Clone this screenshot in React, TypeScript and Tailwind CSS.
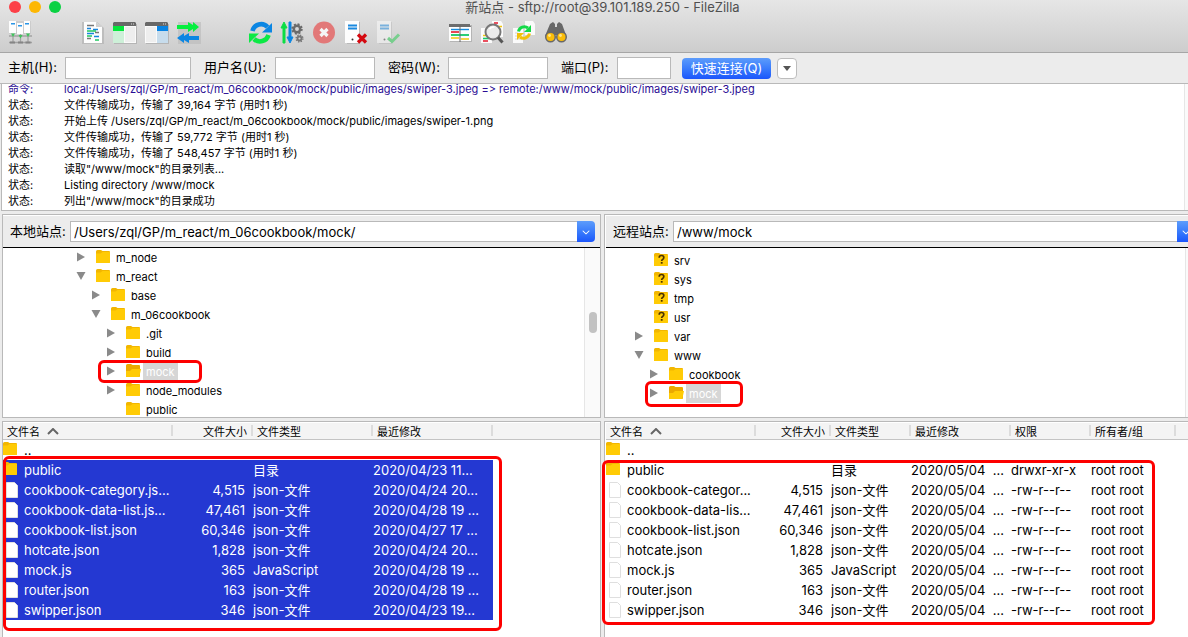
import type { ReactNode } from 'react';
import { clsx } from 'clsx';
import { FaChevronDown } from 'react-icons/fa6';

type LogLine = { kind: 'command' | 'status'; text: string };

type TreeNode = {
  name: string;
  level: 0 | 1 | 2;
  state?: 'open' | 'closed';
  unknown?: boolean;
  selected?: boolean;
};

type FileRow = {
  name: string;
  size?: string;
  type?: string;
  date?: string;
  perms?: string;
  owner?: string;
  folder?: boolean;
};

const logLines: LogLine[] = [
  {
    kind: 'command',
    text: 'local:/Users/zql/GP/m_react/m_06cookbook/mock/public/images/swiper-3.jpeg => remote:/www/mock/public/images/swiper-3.jpeg',
  },
  { kind: 'status', text: '文件传输成功，传输了 39,164 字节 (用时1 秒)' },
  {
    kind: 'status',
    text: '开始上传 /Users/zql/GP/m_react/m_06cookbook/mock/public/images/swiper-1.png',
  },
  { kind: 'status', text: '文件传输成功，传输了 59,772 字节 (用时1 秒)' },
  { kind: 'status', text: '文件传输成功，传输了 548,457 字节 (用时1 秒)' },
  { kind: 'status', text: '读取"/www/mock"的目录列表...' },
  { kind: 'status', text: 'Listing directory /www/mock' },
  { kind: 'status', text: '列出"/www/mock"的目录成功' },
];

const localTree: TreeNode[] = [
  { name: 'm_node', level: 0, state: 'closed' },
  { name: 'm_react', level: 0, state: 'open' },
  { name: 'base', level: 1, state: 'closed' },
  { name: 'm_06cookbook', level: 1, state: 'open' },
  { name: '.git', level: 2, state: 'closed' },
  { name: 'build', level: 2, state: 'closed' },
  { name: 'mock', level: 2, state: 'closed', selected: true },
  { name: 'node_modules', level: 2, state: 'closed' },
  { name: 'public', level: 2 },
];

const remoteTree: TreeNode[] = [
  { name: 'srv', level: 0, unknown: true },
  { name: 'sys', level: 0, unknown: true },
  { name: 'tmp', level: 0, unknown: true },
  { name: 'usr', level: 0, unknown: true },
  { name: 'var', level: 0, state: 'closed' },
  { name: 'www', level: 0, state: 'open' },
  { name: 'cookbook', level: 1, state: 'closed' },
  { name: 'mock', level: 1, state: 'closed', selected: true },
];

const localFiles: FileRow[] = [
  { name: '..', folder: true },
  { name: 'public', type: '目录', date: '2020/04/23 11...', folder: true },
  { name: 'cookbook-category.js...', size: '4,515', type: 'json-文件', date: '2020/04/24 20...' },
  { name: 'cookbook-data-list.js...', size: '47,461', type: 'json-文件', date: '2020/04/28 19 ...' },
  { name: 'cookbook-list.json', size: '60,346', type: 'json-文件', date: '2020/04/27 17 ...' },
  { name: 'hotcate.json', size: '1,828', type: 'json-文件', date: '2020/04/24 20...' },
  { name: 'mock.js', size: '365', type: 'JavaScript', date: '2020/04/28 19 ...' },
  { name: 'router.json', size: '163', type: 'json-文件', date: '2020/04/28 19 ...' },
  { name: 'swipper.json', size: '346', type: 'json-文件', date: '2020/04/23 19...' },
];

const remoteFiles: FileRow[] = [
  { name: '..', folder: true },
  { name: 'public', type: '目录', date: '2020/05/04  ...', perms: 'drwxr-xr-x', owner: 'root root', folder: true },
  { name: 'cookbook-categor...', size: '4,515', type: 'json-文件', date: '2020/05/04  ...', perms: '-rw-r--r--', owner: 'root root' },
  { name: 'cookbook-data-lis...', size: '47,461', type: 'json-文件', date: '2020/05/04  ...', perms: '-rw-r--r--', owner: 'root root' },
  { name: 'cookbook-list.json', size: '60,346', type: 'json-文件', date: '2020/05/04  ...', perms: '-rw-r--r--', owner: 'root root' },
  { name: 'hotcate.json', size: '1,828', type: 'json-文件', date: '2020/05/04  ...', perms: '-rw-r--r--', owner: 'root root' },
  { name: 'mock.js', size: '365', type: 'JavaScript', date: '2020/05/04  ...', perms: '-rw-r--r--', owner: 'root root' },
  { name: 'router.json', size: '163', type: 'json-文件', date: '2020/05/04  ...', perms: '-rw-r--r--', owner: 'root root' },
  { name: 'swipper.json', size: '346', type: 'json-文件', date: '2020/05/04  ...', perms: '-rw-r--r--', owner: 'root root' },
];

const headers = ['文件名', '文件大小', '文件类型', '最近修改', '权限', '所有者/组'];

function ToolButton({ label, children }: { label: string; children: ReactNode }) {
  return (
    <button type="button" aria-label={label} className="size-6 shrink-0">
      <svg viewBox="0 0 24 24" className="size-6 overflow-visible" fill="none">
        {children}
      </svg>
    </button>
  );
}

function Toolbar() {
  return (
    <div className="flex gap-12 pt-[6px] pb-[7px] pl-[9px]">
      <ToolButton label="站点管理器">
        <path d="M0 0h22v13H0z" fill="#bdbdbd" opacity=".5" />
        <path d="M0 0h7v12H0zM8 2h6v11H8zM15 0h6v12h-6z" fill="#fdfdfd" />
        <path d="M2 2h4v1.500H2zM9 4h4v1.500H9zM16 2h4v1.500h-4z" fill="#2a95e6" />
        <path d="M0 15h23M0 21.500h23M4 13v8M11.500 13v8M19 13v8" stroke="#a2a2a2" strokeWidth="1.300" />
        <path d="M2 12.500h4l-2 3.500zM9.500 14h4l-2 3.500zM17 12.500h4l-2 3.500z" fill="#3fc45c" />
        <path d="M1 20.500h5v2H1zM9 20.500h5v2H9zM16.500 20.500h5v2h-5z" fill="#858585" />
      </ToolButton>

      <div className="flex gap-2">
        <ToolButton label="消息日志">
          <path d="M1 1h15l7 6v16H1z" fill="#b4b4b4" opacity=".7" />
          <path d="M3 1h12l6 5v16H3z" fill="#fdfdfd" />
          <path d="M15 1v5h6z" fill="#cfcfcf" />
          <path d="M6 4.500h7M14 11.500h4M6 17.500h4" stroke="#777" strokeWidth="1.300" />
          <path d="M6 7.500h4M12 8.500h5M6 12.500h7M13 15.500h5" stroke="#1685dc" strokeWidth="1.300" />
          <path d="M6 10h9M6 15h5M14 19h4" stroke="#1fc860" strokeWidth="1.300" />
        </ToolButton>
        <ToolButton label="本地目录树">
          <path d="M1 3h23v20H1z" fill="#b5b5b5" />
          <path d="M0 2h23v20H0z" fill="#fafafa" />
          <path d="M1 1h21l1 1v3H0V2z" fill="#686868" />
          <path d="M18 3h1M20 3h1" stroke="#ddd" />
          <path d="M0 5h11v5H0z" fill="#05e63c" />
          <path d="M0 10h11v12H0z" fill="#cdf0d8" />
          <path d="M12 6h10v15H12z" fill="#eee" />
        </ToolButton>
        <ToolButton label="远程目录树">
          <path d="M1 3h23v20H1z" fill="#b5b5b5" />
          <path d="M0 2h23v20H0z" fill="#fafafa" />
          <path d="M1 1h21l1 1v3H0V2z" fill="#686868" />
          <path d="M18 3h1M20 3h1" stroke="#ddd" />
          <path d="M12 5h11v5H12z" fill="#0884e4" />
          <path d="M12 10h11v12H12z" fill="#c7dcec" />
          <path d="M1 6h10v15H1z" fill="#eee" />
        </ToolButton>
        <ToolButton label="传输队列">
          <path d="M1 1h23v22H1z" fill="#b9b9b9" opacity=".6" />
          <path d="M0 4h11V1l5 3V1l6 5-6 5V8l-5 3V8H0z" fill="#06ef3f" />
          <path d="M22 15H12v-3l-5 3v-3l-7 5 7 5v-3l5 3v-3h10z" fill="#0b86e3" />
        </ToolButton>
      </div>

      <div className="flex gap-2">
        <ToolButton label="刷新">
          <path d="M3.500 10A8.800 8.800 0 0 1 18.500 6" stroke="#0b86e3" strokeWidth="4.600" />
          <path d="M23 2v9.500H13z" fill="#0b86e3" />
          <path d="M19.500 14A8.800 8.800 0 0 1 5 18" stroke="#0ce945" strokeWidth="4.600" />
          <path d="M0 22v-9.500H10z" fill="#0ce945" />
        </ToolButton>
        <ToolButton label="处理队列">
          <path d="M2 22V7H0l3-6 3 6H4v15z" fill="#0cde45" stroke="#0cde45" />
          <path d="M8 1v15H6l3 6 3-6h-2V1z" fill="#0b86e3" stroke="#0b86e3" />
          <circle cx="16" cy="8" r="3.200" stroke="#6b6b6b" strokeWidth="2.500" />
          <circle cx="16" cy="8" r="4.800" stroke="#6b6b6b" strokeWidth="1.800" strokeDasharray="2 1.770" />
          <circle cx="18.500" cy="17.500" r="2" stroke="#777" strokeWidth="1.800" />
          <circle cx="18.500" cy="17.500" r="3.400" stroke="#777" strokeWidth="1.300" strokeDasharray="1.400 1.270" />
        </ToolButton>
        <ToolButton label="取消">
          <circle cx="11" cy="11.500" r="11" fill="#e27878" />
          <path d="M7.500 8l7 7M14.500 8l-7 7" stroke="#f4f4f4" strokeWidth="3.200" />
        </ToolButton>
        <ToolButton label="断开连接">
          <path d="M2 1h13v22H2z" fill="#b9b9b9" />
          <path d="M0 0h14v22H0z" fill="#fdfdfd" />
          <path d="M3 4.500h9M3 7.500h9" stroke="#1b8ae0" strokeWidth="1.800" />
          <circle cx="7.500" cy="18.500" r="1" fill="#333" />
          <path d="M13 13.500l8 8M21 13.500l-8 8" stroke="#d40910" strokeWidth="3.200" />
        </ToolButton>
        <ToolButton label="重新连接">
          <g opacity=".5">
            <path d="M2 1h13v22H2z" fill="#b9b9b9" />
            <path d="M0 0h14v22H0z" fill="#fdfdfd" />
            <path d="M3 4.500h9M3 7.500h9" stroke="#1b8ae0" strokeWidth="1.800" />
            <circle cx="7.500" cy="18.500" r="1" fill="#333" />
            <path d="M11 17l4 3.500 7-7" stroke="#1fcb4a" strokeWidth="3" />
          </g>
        </ToolButton>
      </div>

      <div className="flex gap-2">
        <ToolButton label="目录列表过滤器">
          <path d="M1 4h22v17H1z" fill="#b5b5b5" />
          <path d="M0 3h22v17H0z" fill="#fdfdfd" />
          <path d="M0 3h21l1 3H0z" fill="#6d6d6d" />
          <path d="M2 8.500h18" stroke="#178bdd" strokeWidth="1.400" />
          <path d="M2 11h8" stroke="#e3182c" strokeWidth="1.600" />
          <path d="M2 14h18" stroke="#14c967" strokeWidth="1.800" />
          <path d="M2 17h8M12 18h8" stroke="#f2c70c" strokeWidth="1.600" />
          <path d="M11 4v17" stroke="#666" />
        </ToolButton>
        <ToolButton label="目录比较">
          <path d="M11 0h9l2 3v13H11z" fill="#fbfbfb" />
          <path d="M0 7h11v15H0z" fill="#fbfbfb" />
          <path d="M13 2h4M2 20h5" stroke="#e3182c" strokeWidth="1.500" />
          <path d="M17 5.500h4M2 14.500h3" stroke="#f2c70c" strokeWidth="1.500" />
          <path d="M2 17.500h6" stroke="#14c967" strokeWidth="1.600" />
          <circle cx="12" cy="11" r="7.500" fill="#e7e7e7" fillOpacity=".8" stroke="#777" strokeWidth="2" />
          <path d="M8.500 8a5 5 0 0 1 5-2" stroke="#fff" strokeWidth="1.500" />
          <path d="M17 16.500l4.500 5" stroke="#555" strokeWidth="3" />
        </ToolButton>
        <ToolButton label="同步浏览">
          <path d="M12 0h8l2 3v11H12z" fill="#fafafa" />
          <path d="M0 7h10v15H0z" fill="#fafafa" />
          <path d="M2 12h3M2 15h4M2 18h7" stroke="#d2d2d2" />
          <path d="M5.500 10.500A6 6 0 0 1 15 7" stroke="#15da49" strokeWidth="3" />
          <path d="M18 4v7h-7z" fill="#15da49" />
          <path d="M16.500 12.500A6 6 0 0 1 7 16" stroke="#f2c008" strokeWidth="3" />
          <path d="M4 19v-7h7z" fill="#f2c008" />
        </ToolButton>
        <ToolButton label="查找文件">
          <path d="M5 3l3-2 2 2v3h2V3l2-2 3 2 4 11-5 4h-2l-2-4h-2l-2 4H5l-5-3z" fill="#686868" />
          <circle cx="5.500" cy="16" r="5.500" fill="#686868" />
          <circle cx="16.500" cy="16" r="5.500" fill="#686868" />
          <circle cx="5.500" cy="16" r="4" fill="#fbbd08" />
          <circle cx="16.500" cy="16" r="4" fill="#fbbd08" />
          <circle cx="4.500" cy="14.500" r="1.400" fill="#ffe58a" />
          <circle cx="15.500" cy="14.500" r="1.400" fill="#ffe58a" />
        </ToolButton>
      </div>
    </div>
  );
}

function TitleBar() {
  return (
    <header className="border-b border-[#a6a6a6] bg-linear-to-b from-[#e6e6e6] to-[#cdcdcd]">
      <div className="relative flex h-[15px] items-center justify-center">
        <div className="absolute top-px left-[9px] flex gap-2">
          <button type="button" aria-label="关闭" className="size-3 rounded-full bg-[#fc3f47]" />
          <button type="button" aria-label="最小化" className="size-3 rounded-full bg-[#fdb703]" />
          <button type="button" aria-label="缩放" className="size-3 rounded-full bg-[#0ad142]" />
        </div>
        <h1 className="text-[13px] leading-[15px] text-[#505050]">
          新站点 - sftp://root@39.101.189.250 - FileZilla
        </h1>
      </div>
      <Toolbar />
    </header>
  );
}

const fieldClass = 'h-[22px] border border-[#b9b9b9] bg-white px-1 outline-none';

function QuickConnect() {
  return (
    <form className="flex items-center gap-[11px] border-b border-[#b9b9b9] bg-[#ececec] py-1 pl-[6px] text-[13px]">
      <div className="flex items-center">
        <label htmlFor="host" className="w-[59px] pl-[2px]">主机(H):</label>
        <input id="host" className={clsx(fieldClass, 'w-[126px]')} />
      </div>
      <div className="flex items-center">
        <label htmlFor="user" className="w-[73px] pl-[2px]">用户名(U):</label>
        <input id="user" className={clsx(fieldClass, 'w-[100px]')} />
      </div>
      <div className="flex items-center">
        <label htmlFor="pass" className="w-[62px] pl-[2px]">密码(W):</label>
        <input id="pass" type="password" className={clsx(fieldClass, 'w-[100px]')} />
      </div>
      <div className="flex items-center">
        <label htmlFor="port" className="w-[58px] pl-[2px]">端口(P):</label>
        <input id="port" className={clsx(fieldClass, 'w-[54px]')} />
      </div>
      <div className="flex items-center gap-[6px]">
        <button
          type="button"
          className="h-[21px] w-[89px] rounded bg-linear-to-b from-[#5d9cfb] to-[#1c55fb] leading-5 text-white"
        >
          快速连接(Q)
        </button>
        <button
          type="button"
          aria-label="历史记录"
          className="flex h-[21px] w-5 items-center justify-center rounded border border-[#bdbdbd] bg-white"
        >
          <svg viewBox="0 0 8 5" className="w-2" fill="#555">
            <path d="M0 0h8L4 5z" />
          </svg>
        </button>
      </div>
    </form>
  );
}

function MessageLog() {
  return (
    <section className="ml-px flex h-[127px] flex-col border-b border-l border-[#b9b9b9] bg-white">
      <div className="flex min-h-0 flex-1">
        <ul className="flex flex-1 flex-col justify-end overflow-hidden pb-px pl-[6px] text-[11px] leading-4">
          {logLines.map((line) => (
            <li
              key={line.text}
              className={clsx('flex shrink-0 whitespace-pre', line.kind === 'command' && 'text-[#2a0d94]')}
            >
              <span className="w-14">{line.kind === 'command' ? '命令:' : '状态:'}</span>
              <span>{line.text}</span>
            </li>
          ))}
        </ul>
        <div className="w-[21px] border-l border-[#e6e6e6] bg-[#fafafa]" />
      </div>
    </section>
  );
}

function FolderIcon({ open, unknown }: { open?: boolean; unknown?: boolean }) {
  return (
    <svg viewBox="0 0 15 13" className="mb-[2px] h-[13px] w-[15px] shrink-0" fill="none">
      <path d="M0 1.500Q0 0 1.500 0H5l1.500 1H13q1 0 1 1v10q0 1-1 1H0z" fill={open ? '#eba900' : '#f2b600'} />
      {open ? (
        <path d="M0 12.500V7h4l2-2h9l-1.500 7q-.2 1-1 1H0z" fill="#ffcb05" />
      ) : (
        <path d="M0 3.500h4.500L6.500 2H14v10q0 1-1 1H0z" fill="#ffcb05" />
      )}
      {unknown && (
        <>
          <path d="M5.200 4.700Q5.200 2.500 7.500 2.500T9.800 4.500Q9.800 5.800 8.600 6.400 7.700 7 7.700 8" stroke="#4a3200" strokeWidth="1.700" />
          <path d="M6.800 9h1.800v1.700H6.800z" fill="#4a3200" />
        </>
      )}
    </svg>
  );
}

function FileIcon() {
  return (
    <svg viewBox="0 0 15 16" className="h-4 w-[15px] shrink-0" fill="none">
      <path d="M3.500.500h8l3 3v12h-11z" fill="#fff" stroke="#dfdfdf" />
    </svg>
  );
}

function Arrow({ state }: { state?: 'open' | 'closed' }) {
  return (
    <svg viewBox="0 0 8 8" className="mb-px size-2 shrink-0 overflow-visible" fill="#8a8a8a">
      {state === 'closed' && <path d="M0-.500l8 4.500-8 4.500z" />}
      {state === 'open' && <path d="M-.500 0h9L4 8z" />}
    </svg>
  );
}

const indent = ['pl-[74px]', 'pl-[89px]', 'pl-[104px]'];
const remoteIndent = ['pl-[29px]', 'pl-[44px]', 'pl-[59px]'];

function Tree({ nodes, remote }: { nodes: TreeNode[]; remote?: boolean }) {
  return (
    <div className="flex h-[169px] overflow-hidden bg-white">
      <ul className={clsx('flex-1 text-[11px]', remote && 'pt-[3px]')}>
        {nodes.map((node) => (
          <li
            key={node.name}
            className={clsx(
              'flex h-[19px] items-center',
              remote ? remoteIndent[node.level] : indent[node.level],
            )}
          >
            <div className="relative flex h-full items-center">
              <Arrow state={node.state} />
              <span className="w-[11px]" />
              <FolderIcon open={node.selected} unknown={node.unknown} />
              <span
                className={clsx(
                  'ml-[2px] px-[3px] pt-[2px] leading-[17px]',
                  node.selected && 'bg-[#d6d6d6] text-white',
                )}
              >
                {node.name}
              </span>
              {node.selected && (
                <span
                  className={clsx(
                    'absolute rounded-md border-3 border-[#fd0000]',
                    remote
                      ? '-top-[3px] -left-[5px] h-[26px] w-[98px]'
                      : '-top-[2px] -left-[9px] h-[23px] w-[104px]',
                  )}
                />
              )}
            </div>
          </li>
        ))}
      </ul>
      <div
        className={clsx(
          'flex justify-center border-l border-[#e6e6e6] bg-[#fafafa] pt-16',
          remote ? 'w-[18px]' : 'w-4',
        )}
      >
        {!remote && <div className="h-[21px] w-2 rounded-full bg-[#c2c2c2]" />}
      </div>
    </div>
  );
}

function SitePane({
  id,
  label,
  path,
  nodes,
  remote,
}: {
  id: string;
  label: string;
  path: string;
  nodes: TreeNode[];
  remote?: boolean;
}) {
  return (
    <section className={clsx('flex-1 border border-[#b9b9b9] bg-white pt-px', remote && 'px-px')}>
      <div
        className={clsx(
          'flex items-start border-b border-black bg-[#ececec] py-[5px] pl-[7px] text-[13px]',
          remote ? 'pr-2' : 'pr-[5px]',
        )}
      >
        <label htmlFor={id} className="w-[60px] shrink-0 leading-[21px] whitespace-nowrap">
          {label}
        </label>
        <input
          id={id}
          defaultValue={path}
          className="h-[21px] min-w-0 flex-1 border border-r-0 border-[#b9b9b9] bg-white px-[3px] outline-none"
        />
        <button
          type="button"
          aria-label={label}
          className="flex h-[21px] w-[18px] shrink-0 items-center justify-center rounded-r bg-linear-to-b from-[#5d9cfb] to-[#1c55fb]"
        >
          <FaChevronDown className="size-2 text-white" />
        </button>
      </div>
      <Tree nodes={nodes} remote={remote} />
    </section>
  );
}

function FileTable({ rows, remote }: { rows: FileRow[]; remote?: boolean }) {
  const columns = remote ? headers : headers.slice(0, 4);
  const widths = remote
    ? ['w-[150px]', 'w-[75px]', 'w-[80px]', 'w-[100px]', 'w-[80px]', 'w-[85px]']
    : ['w-[170px]', 'w-[80px]', 'w-[120px]', 'w-[120px]'];

  return (
    <section
      className={clsx('relative flex-1 border border-b-0 border-[#b9b9b9] bg-white pt-px', remote && 'px-px')}
    >
      <table className="w-full table-fixed border-collapse text-left">
        <thead>
          <tr className="h-4 border-b border-[#c4c4c4] bg-[#f4f4f4] text-[11px]">
            {columns.map((title, i) => (
              <th key={title} className={clsx('p-0 font-normal', widths[i])}>
                <div
                  className={clsx(
                    'flex h-[11px] items-center gap-[7px] border-r-2 border-[#dcdcdc] pt-1 pl-1 leading-[11px] whitespace-nowrap',
                    i === 1 && 'justify-end pr-1',
                  )}
                >
                  {title}
                  {i === 0 && (
                    <svg viewBox="0 0 12 7" className="mb-[3px] w-3" fill="none" stroke="#666" strokeWidth="2">
                      <path d="M1 6l5-5 5 5" />
                    </svg>
                  )}
                </div>
              </th>
            ))}
            <th className="p-0" />
          </tr>
        </thead>
        <tbody className="text-[13px] leading-5">
          {rows.map((row, i) => {
            const cell = clsx(
              'h-5 overflow-hidden p-0 whitespace-pre',
              !remote && i > 0 && 'bg-[#2438d2] text-white',
            );
            return (
              <tr key={row.name}>
                <td className={cell}>
                  <div className="flex items-center gap-[6px]">
                    {row.folder ? <FolderIcon /> : <FileIcon />}
                    {row.name}
                  </div>
                </td>
                <td className={clsx(cell, 'pr-2 text-right')}>{row.size}</td>
                <td className={cell}>{row.type}</td>
                <td className={cell}>{row.date}</td>
                {remote && <td className={cell}>{row.perms}</td>}
                {remote && <td className={cell}>{row.owner}</td>}
                <td />
              </tr>
            );
          })}
        </tbody>
      </table>
      <div
        className={clsx(
          'absolute rounded-md border-3 border-[#fd0000]',
          remote
            ? 'top-[38px] -left-[3px] h-[165px] w-[553px]'
            : 'top-[34px] left-0 h-[175px] w-[499px]',
        )}
      />
    </section>
  );
}

export default function App() {
  return (
    <div className="h-screen overflow-hidden bg-[#ececec] font-['Inter','Noto_Sans_CJK_SC',sans-serif] text-black [font-feature-settings:'calt'_0]">
      {/* the window runs a little past the right edge of the screen */}
      <main className="-mr-[17px] flex h-full flex-col">
        <TitleBar />
        <QuickConnect />
        <MessageLog />
        <div className="mt-[3px] ml-[2px] flex gap-[3px]">
          <SitePane id="local-path" label="本地站点:" path="/Users/zql/GP/m_react/m_06cookbook/mock/" nodes={localTree} />
          <SitePane id="remote-path" label="远程站点:" path="/www/mock" nodes={remoteTree} remote />
        </div>
        <div className="mt-[3px] ml-[2px] flex flex-1 gap-[3px]">
          <FileTable rows={localFiles} />
          <FileTable rows={remoteFiles} remote />
        </div>
      </main>
    </div>
  );
}
